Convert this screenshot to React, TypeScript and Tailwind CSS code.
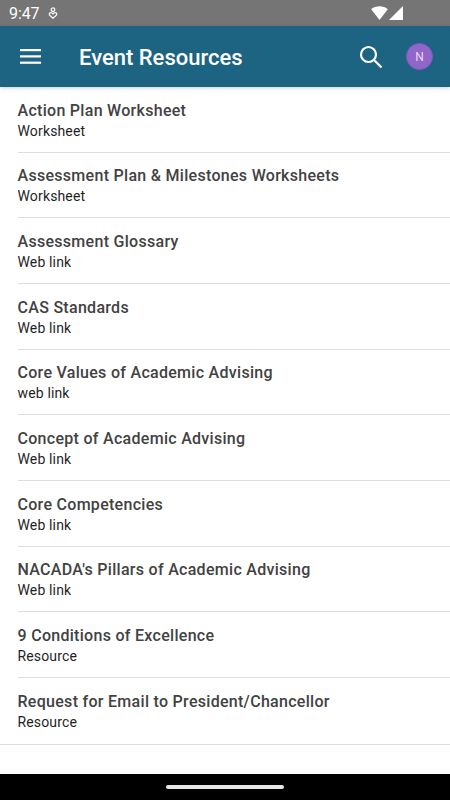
import React from "react";

const resources = [
  { title: "Action Plan Worksheet", type: "Worksheet" },
  { title: "Assessment Plan & Milestones Worksheets", type: "Worksheet" },
  { title: "Assessment Glossary", type: "Web link" },
  { title: "CAS Standards", type: "Web link" },
  { title: "Core Values of Academic Advising", type: "web link" },
  { title: "Concept of Academic Advising", type: "Web link" },
  { title: "Core Competencies", type: "Web link" },
  { title: "NACADA's Pillars of Academic Advising", type: "Web link" },
  { title: "9 Conditions of Excellence", type: "Resource" },
  { title: "Request for Email to President/Chancellor", type: "Resource" },
];

function StatusBar() {
  return (
    <div className="flex h-[26px] shrink-0 items-center bg-[#757575] pl-[9px] pr-[46px] text-white">
      <span className="pt-px text-[16px] leading-[25px] tracking-[-0.1px]">9:47</span>
      <svg className="ml-[9px]" width="10" height="13" viewBox="0 0 10 13" fill="none" stroke="#f4f4f4" strokeWidth="1.3">
        <circle cx="5" cy="2.7" r="1.8" />
        <path d="M5 11.200L1.700 8.200C.2 6.300 3 4.300 5 6.900C7 4.300 9.800 6.300 8.300 8.200Z" />
      </svg>
      <svg className="ml-auto" width="33" height="16" viewBox="0 0 33 16" fill="#fff">
        <path d="M8.500 15L.2 4.200C5 .4 12 .4 16.800 4.200Z" />
        <path d="M32 1V15H18Z" />
      </svg>
    </div>
  );
}

function Header() {
  return (
    <header className="z-10 flex h-[61px] shrink-0 items-center bg-[#1d6382] pl-5 pr-[17px] text-white shadow-[0_1px_4px_rgba(0,0,0,0.2)]">
      <svg width="21" height="15" viewBox="0 0 21 15" fill="#fff">
        <rect width="21" height="2.200" />
        <rect y="6.300" width="21" height="2.200" />
        <rect y="12.600" width="21" height="2.200" />
      </svg>
      <h1 className="ml-[38px] pt-0.5 text-[22px] font-medium leading-7">Event Resources</h1>
      <svg className="ml-auto" width="24" height="24" viewBox="0 0 24 24" fill="none" stroke="#fff" strokeWidth="2.200">
        <circle cx="9.500" cy="9.500" r="7.500" />
        <path d="M14.800 14.800L22.500 22.500" />
      </svg>
      <div className="ml-[23px] flex h-[27px] w-[27px] items-center justify-center rounded-full border border-[#8558bd] bg-[#9066cb] text-[12px] text-[#e6daf5]">
        N
      </div>
    </header>
  );
}

export default function App() {
  return (
    <div className="flex h-[800px] w-[450px] flex-col overflow-hidden bg-white font-['Roboto',sans-serif]">
      <StatusBar />
      <Header />
      <main className="flex-1">
        <ul className="border-b border-[#dedede]">
          {resources.map((item) => (
            <li
              key={item.title}
              className="ml-[17.500px] h-[65.670px] border-b border-[#dedede] pt-[13.800px] last:border-b-0"
            >
              <p className="text-[16px] font-medium leading-[20px] tracking-[0.290px] text-[#424242]">{item.title}</p>
              <p className="text-[14px] leading-[20px] tracking-[0.150px] text-[#1f1f1f]">{item.type}</p>
            </li>
          ))}
        </ul>
      </main>
      <footer className="flex h-[26px] shrink-0 items-center justify-center bg-black">
        <div className="h-1 w-[118px] rounded-full bg-[#e6e6e6]" />
      </footer>
    </div>
  );
}
